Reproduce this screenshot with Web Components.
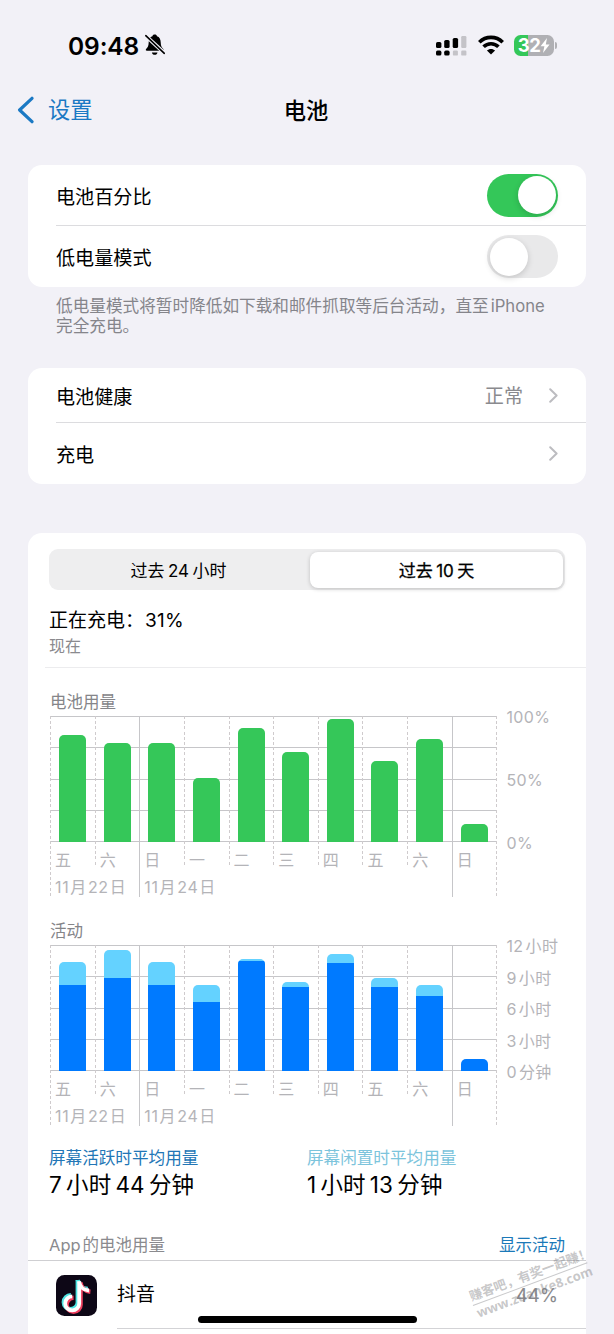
<!DOCTYPE html>
<html lang="zh-CN">
<head>
<meta charset="utf-8">
<title>电池</title>
<style>
    body {
        margin: 0;
        width: 614px;
        height: 1334px;
        overflow: hidden;
        background: #f2f1f7;
        color: #000;
        font-family: Inter, "Noto Sans CJK SC", sans-serif;
        font-size: 19px;
        text-autospace: no-autospace;
    }
</style>
</head>
<body>
<battery-page></battery-page>

<script>
/**
 * Create the shadow root of an element and fill it.
 */
function render(element, html) {
    element.attachShadow({ mode: 'open' })
    element.shadowRoot.innerHTML = html
}

/**
 * Put a small gap where latin characters and ideograms meet.
 */
function spaced(text) {
    return text.replace(/[0-9A-Za-z%]+/g, (run, at) => {
        let cls = (at > 0 ? 'l ' : '') + (at + run.length < text.length ? 'r' : '')
        return `<span class="${cls}">${run}</span>`
    })
}

const SPACED_STYLE = `
    .l { margin-left: var(--gap, 2px); }
    .r { margin-right: var(--gap, 2px); }
`

/** Clock, signal, wifi and battery level. */
class StatusBar extends HTMLElement {
    constructor() {
        super()
        render(this, `
        <style>
            :host {
                display: flex;
                align-items: center;
                height: 90px;
                padding: 0 57px 0 68px;
            }
            .time {
                font-size: 24.5px;
                font-weight: 600;
                letter-spacing: -0.1px;
                line-height: 30px;
                padding-top: 1px;
                width: 77px;
                white-space: nowrap;
            }
            .grow { flex-grow: 1; }
            svg { display: block; }
            .wifi { margin: 0 10px 0 11px; }
            .battery {
                width: 40px;
                height: 21px;
                border-radius: 6.5px;
                background: linear-gradient(90deg, #34c759 14px, #b0b0b4 14px);
                color: #fff;
                display: flex;
                align-items: center;
                justify-content: center;
                font-size: 18.5px;
                font-weight: 700;
                letter-spacing: -0.6px;
                line-height: 21px;
            }
            .tip {
                width: 2px;
                height: 7px;
                margin-left: 1px;
                border-radius: 0 3px 3px 0;
                background: #b0b0b4;
            }
        </style>
        <div class="time">09:48</div>
        <svg width="20" height="22" viewBox="0 0 20 22">
            <path d="M9.7 0.6C11 0.6 11.8 1.3 12 2.2C14.6 3 15.6 5.3 15.7 8.2C15.8 12 16.7 13.3 18.3 15.1C18.9 15.9 18.6 16.8 17.5 16.8H1.9C0.8 16.8 0.5 15.9 1.1 15.1C2.7 13.3 3.6 12 3.7 8.2C3.8 5.3 4.8 3 7.4 2.2C7.6 1.3 8.4 0.6 9.7 0.6Z"/>
            <path d="M6.9 18.5H12.5C12.2 20 11.2 20.8 9.7 20.8C8.2 20.8 7.2 20 6.9 18.5Z"/>
            <path d="M0 1.2L20 19.6" stroke="#f2f1f7" stroke-width="3.8"/>
            <path d="M0.8 1.7L19.3 19.3" stroke="#000" stroke-width="1.6" stroke-linecap="round"/>
        </svg>
        <div class="grow"></div>
        <svg width="31" height="21" viewBox="0 0 31 21">
            <g fill="#000">
                <rect x="0" y="7" width="5.4" height="6" rx="1.6"/>
                <rect x="8.2" y="5" width="5.4" height="8" rx="1.6"/>
                <rect x="16.7" y="3" width="5.4" height="10" rx="1.6"/>
                <rect x="0" y="15.6" width="5.4" height="5" rx="1.6"/>
                <rect x="8.2" y="15.6" width="5.4" height="5" rx="1.6"/>
            </g>
            <g fill="#c4c3c8">
                <rect x="25.2" y="1" width="5.2" height="12" rx="1.2"/>
                <rect x="16.9" y="15.6" width="5" height="5" rx="1.2"/>
                <rect x="25.2" y="15.6" width="5.2" height="5" rx="1.2"/>
            </g>
        </svg>
        <svg class="wifi" width="26" height="20" viewBox="0 0 26 20">
            <g fill="none" stroke="#000" stroke-width="3.6">
                <path d="M1.3 7.3C7.8 0.7 18.2 0.7 24.7 7.3"/>
                <path d="M5.6 11.8C9.7 7.7 16.3 7.7 20.4 11.8"/>
            </g>
            <path d="M13 19.6L8.9 15.5C11.1 13.4 14.9 13.4 17.1 15.5Z"/>
        </svg>
        <div class="battery"><span>32</span><svg width="10" height="15" viewBox="0 0 10 15"><path fill="#fff" d="M7 0L0.6 8.3H4.4L3 15L9.6 6.4H5.8Z"/></svg></div>
        <div class="tip"></div>
        `)
    }
}
customElements.define('status-bar', StatusBar)

/** Back link and page title. */
class NavBar extends HTMLElement {
    constructor() {
        super()
        render(this, `
        <style>
            :host {
                display: grid;
                grid-template-columns: 1fr auto 1fr;
                align-items: center;
                height: 40px;
                line-height: 30px;
                font-size: 22.3px;
                padding: 0 19px 0 17px;
            }
            .back {
                display: flex;
                align-items: center;
                gap: 14px;
                color: #1b79c4;
            }
            .title { font-weight: 500; padding-top: 1px; }
        </style>
        <div class="back">
            <svg width="17" height="28" viewBox="0 0 17 28"><path d="M15 2.3L2.6 14L15 25.7" fill="none" stroke="#1b79c4" stroke-width="3.2" stroke-linecap="round" stroke-linejoin="round"/></svg>
            <slot name="back"></slot>
        </div>
        <div class="title"><slot></slot></div>
        `)
    }
}
customElements.define('nav-bar', NavBar)

/** White rounded group of rows. */
class SettingsCard extends HTMLElement {
    constructor() {
        super()
        render(this, `
        <style>
            :host {
                display: block;
                margin: 0 28px;
                border-radius: 14px;
                background: #fff;
                overflow: hidden;
            }
        </style>
        <slot></slot>
        `)
    }
}
customElements.define('settings-card', SettingsCard)

/** One row: label on the left, anything on the right. */
class SettingsRow extends HTMLElement {
    constructor() {
        super()
        render(this, `
        <style>
            :host {
                display: flex;
                align-items: center;
                box-sizing: border-box;
                height: 61px;
                margin-left: 28px;
                padding-right: 28px;
                line-height: 26px;
                font-size: 19.1px;
            }
            :host([divided]) { border-bottom: 1px solid #dcdcdf; }
            .label { flex-grow: 1; padding-top: 3px; }
            .value { display: flex; align-items: center; color: #8a8a8e; }
            :host([link]) .value { padding-top: 2px; }
            svg { display: none; margin-left: 26px; }
            :host([link]) svg { display: block; }
        </style>
        <div class="label"><slot></slot></div>
        <div class="value"><slot name="value"></slot></div>
        <svg width="9" height="15" viewBox="0 0 9 15"><path d="M1.2 1.2L7.6 7.5L1.2 13.8" fill="none" stroke="#bcbcc0" stroke-width="2" stroke-linecap="round" stroke-linejoin="round"/></svg>
        `)
    }
}
customElements.define('settings-row', SettingsRow)

class ToggleSwitch extends HTMLElement {
    constructor() {
        super()
        render(this, `
        <style>
            :host {
                display: flex;
                box-sizing: border-box;
                width: 71px;
                height: 43px;
                padding: 2.5px;
                border-radius: 22px;
                background: #e9e9ea;
            }
            :host([on]) { background: #34c759; justify-content: flex-end; }
            .knob {
                width: 38px;
                height: 38px;
                border-radius: 50%;
                background: #fff;
                box-shadow: 0 2px 6px rgba(0, 0, 0, 0.16);
            }
        </style>
        <div class="knob"></div>
        `)
    }
}
customElements.define('toggle-switch', ToggleSwitch)

/** Period selector, the last segment is the selected one. */
class SegmentedControl extends HTMLElement {
    constructor() {
        super()
        let items = this.getAttribute('items').split(',')
        render(this, `
        <style>
            ${SPACED_STYLE}
            :host {
                display: grid;
                grid-template-columns: 259px 253px;
                grid-template-rows: 36px;
                gap: 2px;
                box-sizing: border-box;
                width: 516px;
                height: 41px;
                padding: 3px 2px 2px 0;
                border-radius: 9px;
                background: #eeeeef;
                font-size: 17px;
                line-height: 38px;
                text-align: center;
                --gap: 3.5px;
            }
            .selected {
                border-radius: 8px;
                background: #fff;
                box-shadow: 0 1px 4px rgba(0, 0, 0, 0.2);
                -webkit-text-stroke: 0.3px #000;
            }
        </style>
        <div>${spaced(items[0])}</div>
        <div class="selected">${spaced(items[1])}</div>
        `)
    }
}
customElements.define('segmented-control', SegmentedControl)

const DAYS = ['五', '六', '日', '一', '二', '三', '四', '五', '六', '日']
const DATES = { 0: '11月22日', 2: '11月24日' }

/**
 * Ten day bar chart. Each bar is given as "height" or "height/lower part",
 * in pixels of the 125px plot.
 */
class UsageChart extends HTMLElement {
    constructor() {
        super()

        let columns = this.getAttribute('bars').split(' ').map((bar, i) => {
            let [total, lower] = bar.split('/')
            let line = i == 2 || i == 9 ? 'solid' : 'dashed'
            let size = i == 0 || i == 2 || i == 9 ? 'long' : ''
            return `
            <div class="column ${line} ${size}">
                <div class="area">
                    <div class="bar" style="height: ${total}px"><div class="lower" style="height: ${lower || total}px"></div></div>
                </div>
                <div class="day">${DAYS[i]}</div>
                <div class="date">${spaced(DATES[i] || '')}</div>
            </div>`
        }).join('')

        let labels = this.getAttribute('axis').split(',').map(t => `<div>${spaced(t)}</div>`).join('')

        render(this, `
        <style>
            ${SPACED_STYLE}
            :host { display: block; height: 229px; color: #b4b4b8; font-size: 16px; }
            .title { height: 32px; line-height: 36px; padding-left: 1px; color: #858589; font-size: 16.5px; }
            .body { display: flex; margin-left: 1px; }
            .plot {
                display: grid;
                grid-template-columns: repeat(10, 44.65px) 1px;
                height: 181px;
                background:
                    linear-gradient(#c6c6c9, #c6c6c9) 0 0 / 100% 1px no-repeat,
                    linear-gradient(#c6c6c9, #c6c6c9) 0 31px / 100% 1px no-repeat,
                    linear-gradient(#c6c6c9, #c6c6c9) 0 63px / 100% 1px no-repeat,
                    linear-gradient(#c6c6c9, #c6c6c9) 0 94px / 100% 1px no-repeat,
                    linear-gradient(#c6c6c9, #c6c6c9) 0 125px / 100% 1px no-repeat;
            }
            .column {
                height: 151px;
                min-width: 0;
                white-space: nowrap;
                background-repeat: no-repeat;
                background-size: 1px 100%;
            }
            .dashed { background-image: repeating-linear-gradient(#cfcbcd 0 3px, transparent 3px 5.2px); }
            .solid { background-image: linear-gradient(#c6c6c9, #c6c6c9); }
            .long { height: 181px; }
            .area { display: flex; align-items: flex-end; height: 126px; padding-left: 9px; }
            .bar {
                display: flex;
                align-items: flex-end;
                width: 27px;
                border-radius: 5px 5px 0 0;
                background: var(--upper);
                overflow: hidden;
            }
            .lower { width: 100%; background: var(--lower); }
            .day { height: 33px; line-height: 36px; padding-left: 5px; }
            .date { line-height: 25px; padding-left: 5px; letter-spacing: 0.7px; --gap: 0.9px; }
            .axis {
                display: flex;
                flex-direction: column;
                justify-content: space-between;
                height: 146px;
                margin: -9px 0 0 9px;
                line-height: 20px;
                letter-spacing: 0.4px;
            }
        </style>
        <div class="title"><slot></slot></div>
        <div class="body">
            <div class="plot">${columns}<div class="column dashed long"></div></div>
            <div class="axis">${labels}</div>
        </div>
        `)
    }
}
customElements.define('usage-chart', UsageChart)

/** Average screen time, label over duration. */
class AverageUsage extends HTMLElement {
    constructor() {
        super()
        render(this, `
        <style>
            ${SPACED_STYLE}
            :host { display: block; width: 258px; white-space: nowrap; --gap: 4.2px; }
            .label { color: var(--tint); font-size: 16.6px; line-height: 26px; }
            .value { font-size: 22.5px; line-height: 28px; letter-spacing: 0.1px; }
        </style>
        <div class="label"><slot></slot></div>
        <div class="value">${spaced(this.getAttribute('value'))}</div>
        `)
    }
}
customElements.define('average-usage', AverageUsage)

/** App icon, name and share of the battery. */
class AppRow extends HTMLElement {
    constructor() {
        super()
        render(this, `
        <style>
            :host { display: flex; align-items: center; height: 68px; padding-left: 28px; }
            svg { display: block; margin-right: 20px; }
            .text {
                display: flex;
                justify-content: space-between;
                align-items: center;
                box-sizing: border-box;
                height: 68px;
                flex-grow: 1;
                padding-right: 28px;
                border-bottom: 1px solid #d3d3d6;
                line-height: 26px;
            }
            .share { color: #8a8a8e; font-size: 18.6px; }
        </style>
        <svg width="41" height="41" viewBox="0 0 41 41">
            <rect width="41" height="41" rx="8.5" fill="#0d0716"/>
            <g fill="none" stroke-width="4.4">
                <g stroke="#4fe3e2"><path d="M21.8 5V27.2A7 7 0 1 1 14.8 20.2"/><path d="M21.8 5C22.3 10 26.2 13.6 31.8 14"/></g>
                <g stroke="#ee3f5f"><path d="M24.6 7.4V29.8A7 7 0 1 1 17.6 22.8"/><path d="M24.6 7.8C25.1 12.8 28.9 16.3 34.4 16.8"/></g>
                <g stroke="#fff" stroke-width="3.8"><path d="M23.2 6.2V28.4A7 7 0 1 1 16.2 21.4"/><path d="M23.2 6.6C23.7 11.6 27.5 15.1 33 15.5"/></g>
            </g>
        </svg>
        <div class="text"><slot></slot><div class="share"><slot name="share"></slot></div></div>
        `)
    }
}
customElements.define('app-row', AppRow)

/** Slanted site mark lying over the corner of the page. */
class SiteMark extends HTMLElement {
    constructor() {
        super()
        render(this, `
        <style>
            :host {
                position: absolute;
                left: 473px;
                top: 1288px;
                width: 122px;
                transform: rotate(-20.5deg);
                transform-origin: 0 50%;
                white-space: nowrap;
                color: rgba(120, 120, 124, 0.42);
                font-weight: 700;
            }
            .name { font-size: 12.9px; line-height: 17px; border-bottom: 1px solid rgba(120, 120, 124, 0.4); }
            .site { font-size: 13px; line-height: 17px; padding-left: 1px; font-family: "Open Sans", Inter, sans-serif; }
        </style>
        <div class="name">赚客吧，有奖一起赚！</div>
        <div class="site">www.zuanke8.com</div>
        `)
    }
}
customElements.define('site-mark', SiteMark)

class BatteryPage extends HTMLElement {
    constructor() {
        super()
        render(this, `
        <style>
            ${SPACED_STYLE}
            :host { display: block; position: relative; height: 1334px; overflow: hidden; }
            .first { margin-top: 35px; }
            .note {
                margin: 9px 0 32px 56px;
                color: #85858b;
                font-size: 16.65px;
                line-height: 20px;
            }
            .health { height: 55px; }
            .charging-row { height: 61px; }
            .usage { margin-top: 49px; padding: 16px 0 30px 21px; }
            .now {
                height: 77px;
                margin-left: -4px;
                padding-left: 4px;
                border-bottom: 1px solid #ececee;
            }
            .state { padding-top: 17px; line-height: 27px; font-size: 19px; }
            .percent { margin-left: 1px; letter-spacing: 0.3px; }
            .when { line-height: 24px; color: #8a8a8e; font-size: 16px; }
            .charts { padding-top: 16px; }
            .averages { display: flex; padding-top: 3px; }
            .apps-title {
                display: flex;
                justify-content: space-between;
                height: 34px;
                margin: 27px 0 0 -21px;
                padding: 0 21px;
                border-bottom: 1px solid #cfcfd2;
                line-height: 38px;
                font-size: 16.5px;
                color: #8a8a8e;
            }
            .show { color: #1b79b8; }
            .apps { margin-left: -21px; }
            .home {
                position: absolute;
                left: 198px;
                top: 1316px;
                width: 219px;
                height: 7px;
                border-radius: 4px;
                background: #000;
            }
        </style>
        <status-bar></status-bar>
        <nav-bar><span slot="back">设置</span>电池</nav-bar>

        <settings-card class="first">
            <settings-row divided>电池百分比<toggle-switch slot="value" on></toggle-switch></settings-row>
            <settings-row>低电量模式<toggle-switch slot="value"></toggle-switch></settings-row>
        </settings-card>
        <div class="note">低电量模式将暂时降低如下载和邮件抓取等后台活动，直至<span class="l">iPhone</span><br>完全充电。</div>

        <settings-card>
            <settings-row class="health" divided link>电池健康<span slot="value">正常</span></settings-row>
            <settings-row class="charging-row" link>充电</settings-row>
        </settings-card>

        <settings-card class="usage">
            <segmented-control items="过去24小时,过去10天"></segmented-control>
            <div class="now">
                <div class="state">正在充电：<span class="percent">31%</span></div>
                <div class="when">现在</div>
            </div>
            <div class="charts">
                <usage-chart style="--upper: #35c759; --lower: #35c759" axis="100%,50%,0%"
                    bars="107 99 99 64.5 114.5 90 123.5 81 103 18">电池用量</usage-chart>
                <usage-chart style="--upper: #64d2ff; --lower: #007aff" axis="12小时,9小时,6小时,3小时,0分钟"
                    bars="109/86 121.5/93.5 109/86 86.5/69 112.5/110 89.5/84.5 117/108 93.5/84 86.5/75 12">活动</usage-chart>
            </div>
            <div class="averages">
                <average-usage style="--tint: #2276b6" value="7小时44分钟">屏幕活跃时平均用量</average-usage>
                <average-usage style="--tint: #7cc4dc" value="1小时13分钟">屏幕闲置时平均用量</average-usage>
            </div>
            <div class="apps-title"><div><span class="r">App</span>的电池用量</div><div class="show">显示活动</div></div>
            <div class="apps">
                <app-row>抖音<span slot="share">44%</span></app-row>
            </div>
        </settings-card>
        <div class="home"></div>
        <site-mark></site-mark>
        `)
    }
}
customElements.define('battery-page', BatteryPage)
</script>
</body>
</html>
